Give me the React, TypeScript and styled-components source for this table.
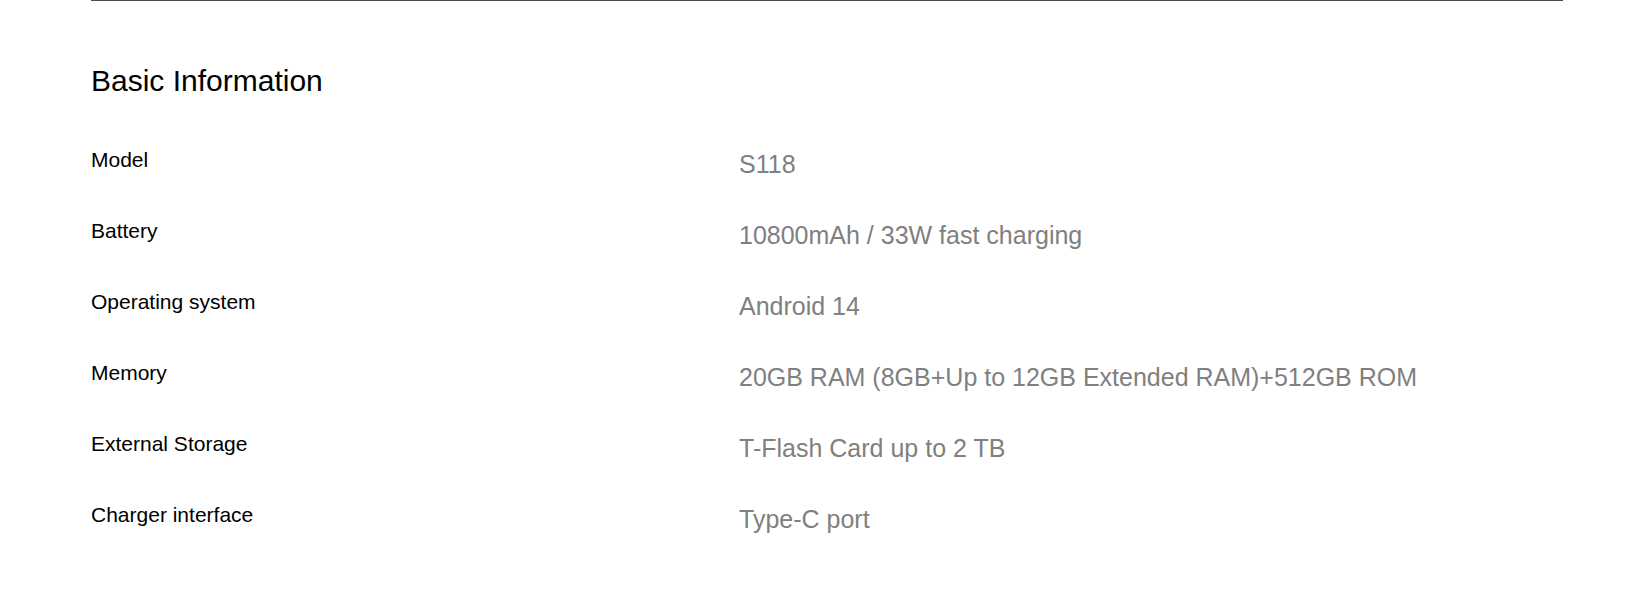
import React from "react";
import styled, { createGlobalStyle } from "styled-components";

const GlobalStyle = createGlobalStyle`
  html, body { margin: 0; padding: 0; background: #ffffff; }
  body { font-family: "Liberation Sans", Arial, sans-serif; }
`;

const Page = styled.div`
  width: 1632px;
  height: 607px;
  overflow: hidden;
  box-sizing: border-box;
  padding: 0 69px 0 91px;
`;

const Section = styled.section`
  border-top: 1px solid #4d4d4d;
  display: flex;
  flex-direction: column;
`;

const Title = styled.h2`
  margin: 62px 0 0 0;
  font-size: 30px;
  line-height: 36px;
  font-weight: 400;
  color: #000000;
`;

const SpecList = styled.dl`
  margin: 48px 0 0 0;
  display: flex;
  flex-direction: column;
  gap: 39px;
`;

const SpecRow = styled.div`
  display: grid;
  grid-template-columns: 648px 1fr;
  align-items: start;
  height: 32px;
`;

const SpecLabel = styled.dt`
  margin: 1px 0 0 0;
  font-size: 21px;
  line-height: 24px;
  color: #000000;
`;

const SpecValue = styled.dd`
  margin: 2px 0 0 0;
  font-size: 25px;
  line-height: 30px;
  color: #808080;
`;

const specs: [string, string][] = [
  ["Model", "S118"],
  ["Battery", "10800mAh / 33W fast charging"],
  ["Operating system", "Android 14"],
  ["Memory", "20GB RAM (8GB+Up to 12GB Extended RAM)+512GB ROM"],
  ["External Storage", "T-Flash Card up to 2 TB"],
  ["Charger interface", "Type-C port"],
];

export default function App() {
  return (
    <>
      <GlobalStyle />
      <Page>
        <Section>
          <Title>Basic Information</Title>
          <SpecList>
            {specs.map(([label, value]) => (
              <SpecRow key={label}>
                <SpecLabel>{label}</SpecLabel>
                <SpecValue>{value}</SpecValue>
              </SpecRow>
            ))}
          </SpecList>
        </Section>
      </Page>
    </>
  );
}
